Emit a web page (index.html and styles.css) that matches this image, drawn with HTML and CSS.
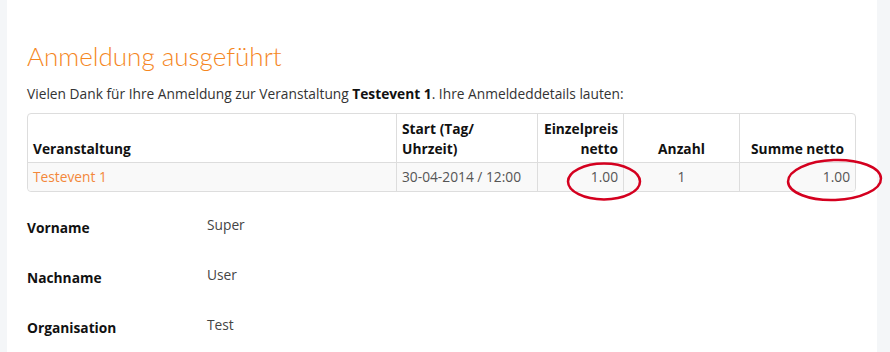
FILE: index.html
```html
<!DOCTYPE html>
<html lang="de">
<head>
    <meta charset="UTF-8">
    <meta name="viewport" content="width=device-width, initial-scale=1.0">
    <title>Anmeldung ausgeführt</title>
    <link rel="stylesheet" href="styles.css">
</head>
<body>
    <!-- weisser Inhaltsbereich -->
    <div class="panel">
        <h1 class="title">Anmeldung ausgeführt</h1>
        <p class="intro">Vielen Dank für Ihre Anmeldung zur Veranstaltung <b>Testevent 1</b>. Ihre Anmeldeddetails lauten:</p>

        <table class="orders">
            <colgroup>
                <col class="c-event">
                <col class="c-start">
                <col class="c-price">
                <col class="c-count">
                <col class="c-sum">
            </colgroup>
            <thead>
                <tr>
                    <th>Veranstaltung</th>
                    <th>Start (Tag/ Uhrzeit)</th>
                    <th class="right">Einzelpreis netto</th>
                    <th class="center">Anzahl</th>
                    <th class="center">Summe netto</th>
                </tr>
            </thead>
            <tbody>
                <tr>
                    <td><a href="javascript:;">Testevent 1</a></td>
                    <td>30-04-2014 / 12:00</td>
                    <td class="right">1.00</td>
                    <td class="center">1</td>
                    <td class="right">1.00</td>
                </tr>
            </tbody>
        </table>

        <!-- Teilnehmerdaten -->
        <div class="details">
            <div class="row">
                <span class="label">Vorname</span>
                <span class="value">Super</span>
            </div>
            <div class="row">
                <span class="label">Nachname</span>
                <span class="value">User</span>
            </div>
            <div class="row">
                <span class="label">Organisation</span>
                <span class="value">Test</span>
            </div>
        </div>

        <!-- rote Markierungen ueber der Tabelle -->
        <svg class="marks" width="890" height="352" viewBox="0 0 890 352">
            <ellipse cx="597" cy="181.5" rx="36" ry="18" />
            <ellipse cx="827.5" cy="180" rx="46.5" ry="20" transform="rotate(-2 827.5 180)" />
        </svg>
    </div>
</body>
</html>
```

FILE: styles.css
```css
*{
    margin: 0;
    padding: 0;
    box-sizing: border-box;
}
body{
    background-color: #f4f6f8;
    font-family: "Open Sans", "Liberation Sans", sans-serif;
    font-size: 13.75px;
    line-height: 20px;
    color: #333;
}
/* Inhaltsbereich */
.panel{
    position: relative;
    width: 870px;
    min-height: 352px;
    margin-left: 7px;
    background-color: #fff;
    padding: 41px 21px 0 20px;
}
.title{
    font-family: Lato, "Open Sans", sans-serif;
    font-weight: 300;
    font-size: 26px;
    line-height: 30px;
    color: #f5871f;
    margin-bottom: 13px;
}
.intro{
    margin-bottom: 9px;
}
.intro b{
    color: #111;
}

/* Tabelle */
.orders{
    width: 829px;
    table-layout: fixed;
    border-collapse: separate;
    border-spacing: 0;
    border: 1px solid #ddd;
    border-radius: 4px;
}
.c-event{ width: 368px; }
.c-start{ width: 141px; }
.c-price{ width: 86px; }
.c-count{ width: 116px; }
.c-sum{ width: 116px; }

.orders th,
.orders td{
    padding: 4px 5px;
    text-align: left;
    vertical-align: bottom;
    border-left: 1px solid #ddd;
}
.orders th:first-child,
.orders td:first-child{
    border-left: none;
}
.orders th{
    font-weight: 700;
    color: #111;
    padding: 5px 5px 3px;
}
.orders td{
    border-top: 1px solid #ddd;
    background-color: #f9f9f9;
    color: #555;
}
.orders tr td:first-child{
    border-bottom-left-radius: 4px;
}
.orders tr td:last-child{
    border-bottom-right-radius: 4px;
}
.orders a{
    color: #f3883b;
    text-decoration: none;
}
.orders .right{
    text-align: right;
}
.orders .center{
    text-align: center;
}

/* Teilnehmerdaten */
.details{
    padding-top: 23px;
}
.row{
    display: flex;
    height: 50px;
}
.label{
    width: 180px;
    padding-top: 3px;
    font-weight: 700;
    color: #111;
}
.value{
    color: #444;
}

/* Markierungen */
.marks{
    position: absolute;
    left: 0;
    top: 0;
    overflow: visible;
    pointer-events: none;
}
.marks ellipse{
    fill: none;
    stroke: #d4001f;
    stroke-width: 2.5;
}
```
